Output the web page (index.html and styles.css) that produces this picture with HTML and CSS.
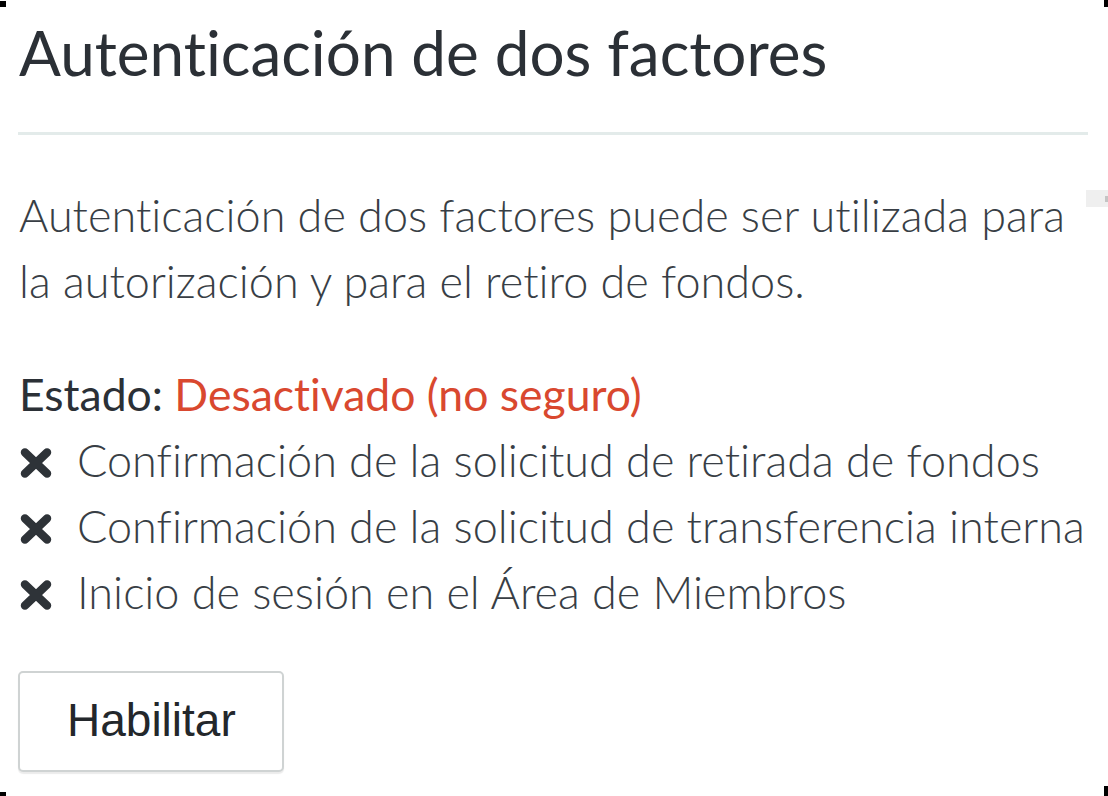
FILE: index.html
```html
<!DOCTYPE html>
<html lang="es">
<head>
<meta charset="utf-8">
<title>Autenticación de dos factores</title>
<link rel="stylesheet" href="styles.css">
</head>
<body>
<div class="panel">
  <h2 class="title">Autenticación de dos factores</h2>
  <hr class="divider">
  <p class="desc">Autenticación de dos factores puede ser utilizada para la autorización y para el retiro de fondos.</p>
  <div class="status">Estado: <span class="status-off">Desactivado (no seguro)</span></div>
  <ul class="features">
    <li class="feature"><svg class="x-icon" viewBox="0 0 32 30" width="32" height="30"><path d="M5 4.5 L27 25.5 M27 4.5 L5 25.5"/></svg><span>Confirmación de la solicitud de retirada de fondos</span></li>
    <li class="feature"><svg class="x-icon" viewBox="0 0 32 30" width="32" height="30"><path d="M5 4.5 L27 25.5 M27 4.5 L5 25.5"/></svg><span>Confirmación de la solicitud de transferencia interna</span></li>
    <li class="feature"><svg class="x-icon" viewBox="0 0 32 30" width="32" height="30"><path d="M5 4.5 L27 25.5 M27 4.5 L5 25.5"/></svg><span>Inicio de sesión en el Área de Miembros</span></li>
  </ul>
  <button class="btn" type="button">Habilitar</button>
  <div class="scroll-stub"><div class="scroll-stub-thumb"></div></div>
</div>
<div class="corner corner-tl"></div>
<div class="corner corner-tr"></div>
<div class="corner corner-bl"></div>
<div class="corner corner-br"></div>
</body>
</html>
```
FILE: styles.css
```css
html, body {
  margin: 0;
  padding: 0;
  background: #ffffff;
}
body {
  width: 1108px;
  height: 796px;
  overflow: hidden;
  position: relative;
  font-family: "Lato", "Open Sans", sans-serif;
  font-variant-ligatures: none;
  color: #353b41;
}
.panel {
  padding: 0 20px 0 18px;
}
.title {
  margin: 15px 0 0 1px;
  font-size: 62px;
  line-height: 74px;
  font-weight: 400;
  color: #2b3036;
}
.divider {
  margin: 43px 0 0 0;
  border: 0;
  height: 3px;
  background: #e3ebea;
}
.desc {
  max-width: 1062px;
  margin: 47px 0 0 1px;
  font-size: 45px;
  line-height: 66px;
  font-weight: 300;
  color: #383e45;
}
.status {
  margin: 47px 0 0 1px;
  font-size: 44.5px;
  line-height: 66px;
  font-weight: 400;
  color: #2b3036;
}
.status-off {
  color: #d9482f;
}
.features {
  list-style: none;
  margin: 0;
  padding: 0;
}
.feature {
  display: flex;
  align-items: center;
  gap: 25px;
  font-size: 45px;
  line-height: 66px;
  font-weight: 300;
  color: #383e45;
  white-space: nowrap;
}
.x-icon {
  flex: none;
  margin: 6px 0 0 2px;
  fill: none;
  stroke: #2e3338;
  stroke-width: 8.5;
  stroke-linecap: round;
}
.btn {
  display: block;
  margin-top: 46px;
  padding: 21px 46px 24px 47px;
  font-family: "Liberation Sans", Arial, sans-serif;
  font-size: 46px;
  line-height: 52px;
  color: #23272b;
  background: #ffffff;
  border: 2px solid #cfd3d3;
  border-radius: 5px;
  box-shadow: 0 2px 1px rgba(0, 0, 0, 0.08);
}
.scroll-stub {
  position: absolute;
  left: 1086px;
  top: 190px;
  width: 22px;
  height: 17px;
  background: #efefef;
}
.scroll-stub-thumb {
  position: absolute;
  right: 0;
  top: 6px;
  width: 3px;
  height: 6px;
  background: #c4c4c4;
}
.corner {
  position: absolute;
  width: 6px;
  height: 6px;
  background: #000000;
}
.corner-tl { left: 0; top: 1px; }
.corner-tr { right: 0; top: 0; width: 4px; height: 7px; }
.corner-bl { left: 0; bottom: 0; height: 4px; }
.corner-br { right: 0; bottom: 0; width: 4px; height: 10px; }
```
